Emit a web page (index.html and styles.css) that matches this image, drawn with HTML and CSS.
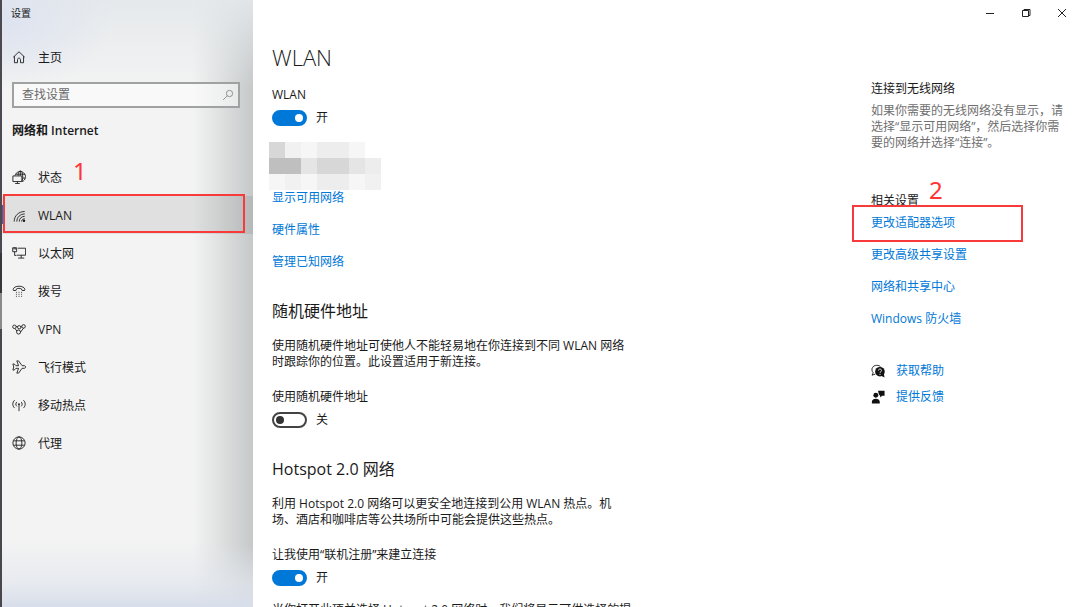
FILE: index.html
```html
<!DOCTYPE html>
<html lang="zh-CN">
<head>
<meta charset="utf-8">
<title>设置</title>
<meta name="viewport" content="width=device-width, initial-scale=1">
<link rel="stylesheet" href="styles.css">
</head>
<body>
<div class="window">
  <div class="edge"></div>
  <aside class="sidebar">
    <div class="app-title">设置</div>
    <a class="nav-item home" href="#">
      <svg class="icon" viewBox="0 0 16 16"><path d="M1.500 8.200 8 2l6.500 6.200M2.800 7v7.500h3.500V11c0-2.300 3.400-2.300 3.400 0v3.500h3.500V7"/></svg>
      <span class="nav-text">主页</span>
    </a>
    <form class="search">
      <input class="search-input" type="search" placeholder="查找设置" aria-label="查找设置">
      <button class="search-button" type="button" aria-label="搜索">
        <svg class="icon-search" viewBox="0 0 16 16"><circle cx="10" cy="6" r="4.200"/><path d="M7 9 1.500 14.500"/></svg>
      </button>
    </form>
    <h2 class="group-title">网络和 Internet</h2>
    <nav class="nav">
      <a class="nav-item" href="#">
        <svg class="icon" viewBox="0 0 16 16"><path d="M3.500 6.500a6 6 0 1 1 8 6.800M4 4.800h11M12 9.200h3.200M7 6.500C7 3 8.200 1 9.500 1s2.800 2.500 2.800 6c0 2.500-.3 4-.8 5.500M9.500 1v5.500"/><path d="M1 6.800h10.300v6.400H1zM6.200 13.200v2.300M3.500 15.500h5.400"/></svg>
        <span class="nav-text">状态</span>
        <span class="mark mark-one">1</span>
      </a>
      <a class="nav-item current" href="#" aria-current="page">
        <svg class="icon" viewBox="0 0 16 16"><path d="M2.500 15.500C2.500 9 7.500 4 14.500 4M5.500 15.500c0-5 4-8.700 9-8.700M8.300 15.500c0-3.500 2.700-6 6.200-6M11 15.500c0-2 1.500-3.200 3.500-3.200"/><circle class="solid" cx="13.700" cy="14.500" r="1.400"/></svg>
        <span class="nav-text">WLAN</span>
        <span class="frame frame-nav"></span>
      </a>
      <a class="nav-item" href="#">
        <svg class="icon" viewBox="0 0 16 16"><path d="M6.500 2.500h9v8h-10M10.500 10.500v3.300M7 13.800h7M.8 2h4.500v4.500H.8zM3 6.500v4.300h2M2.300 2v2M3.800 2v2"/></svg>
        <span class="nav-text">以太网</span>
      </a>
      <a class="nav-item" href="#">
        <svg class="icon" viewBox="0 0 16 16"><path d="M1.300 6.500c0-5.300 13.400-5.300 13.400 0l-.4 1-2.800-.2-.8-1.800c-1.500-.7-3.900-.7-5.400 0l-.8 1.800-2.800.2z"/><path d="M4.500 9.500h1M7.500 9.500h1M10.500 9.500h1M4.500 11.800h1M7.500 11.800h1M10.500 11.800h1M4.500 14.100h1M7.500 14.100h1M10.500 14.100h1"/></svg>
        <span class="nav-text">拨号</span>
      </a>
      <a class="nav-item" href="#">
        <svg class="icon" viewBox="0 0 16 16"><circle cx="2.800" cy="5.500" r="2"/><circle cx="8.200" cy="6" r="1.900"/><circle cx="13.200" cy="5" r="2"/><circle cx="7.500" cy="11.500" r="2.300"/><path d="M3.500 7.500 5.500 10.300M4.800 5.200h1.700M10.100 5.500h1.200M13.200 7 9.800 11.500"/></svg>
        <span class="nav-text">VPN</span>
      </a>
      <a class="nav-item" href="#">
        <svg class="icon" viewBox="0 0 16 16"><path d="M1 4.500h1.500L4.500 6.500h3L5.500 1H7.500l4 5.500h2.300c2.300 0 2.300 3 0 3h-2.300l-4 5.500H5.500l2-5.500h-3l-2 2H1L2 8z"/></svg>
        <span class="nav-text">飞行模式</span>
      </a>
      <a class="nav-item" href="#">
        <svg class="icon" viewBox="0 0 16 16"><path d="M3 2.500C.2 5 .2 9 3 11.500M5.500 4.500c-1.500 1.500-1.500 3.500 0 5M13 2.500c2.800 2.500 2.800 6.500 0 9M10.500 4.500c1.500 1.500 1.500 3.500 0 5M8 7v8"/><circle class="solid" cx="8" cy="7" r="1"/></svg>
        <span class="nav-text">移动热点</span>
      </a>
      <a class="nav-item" href="#">
        <svg class="icon" viewBox="0 0 16 16"><circle cx="8" cy="8" r="7"/><ellipse cx="8" cy="8" rx="3.300" ry="7"/><path d="M1.700 5.500h12.600M1.700 10.500h12.600"/></svg>
        <span class="nav-text">代理</span>
      </a>
    </nav>
  </aside>

  <div class="page">
    <header class="caption">
      <button class="caption-button" type="button" aria-label="最小化"><svg class="icon-caption" viewBox="0 0 10 10"><path d="M1 5.500h8"/></svg></button>
      <button class="caption-button" type="button" aria-label="还原"><svg class="icon-caption" viewBox="0 0 10 10"><path d="M1.500 2.500h6v6h-6zM3 2.500v-1h6v6H7.500"/></svg></button>
      <button class="caption-button" type="button" aria-label="关闭"><svg class="icon-caption" viewBox="0 0 10 10"><path d="M1 1l8 8M9 1 1 9"/></svg></button>
    </header>
    <div class="columns">
      <main class="content">
        <h1 class="page-title">WLAN</h1>
        <section>
          <label class="label" for="wlan">WLAN</label>
          <div class="switch-row"><input class="switch" type="checkbox" role="switch" id="wlan" checked><span>开</span></div>
          <div class="mosaic" aria-hidden="true">
            <i class="g4"></i><i class="g1"></i><i class="g0"></i><i class="g2"></i><i class="g2"></i><i class="g0"></i><i></i>
            <i class="g5"></i><i class="g5"></i><i class="g3"></i><i class="g4"></i><i class="g4"></i><i class="g3"></i><i class="g2"></i>
            <i class="g0"></i><i class="g1"></i><i class="g0"></i><i class="g2"></i><i class="g2"></i><i class="g0"></i><i class="g1"></i>
          </div>
          <div class="links">
            <a class="link" href="#">显示可用网络</a>
            <a class="link" href="#">硬件属性</a>
            <a class="link" href="#">管理已知网络</a>
          </div>
        </section>
        <section class="section">
          <h2 class="section-title">随机硬件地址</h2>
          <p class="text">使用随机硬件地址可使他人不能轻易地在你连接到不同 WLAN 网络时跟踪你的位置。此设置适用于新连接。</p>
          <label class="label" for="random">使用随机硬件地址</label>
          <div class="switch-row"><input class="switch" type="checkbox" role="switch" id="random"><span>关</span></div>
        </section>
        <section class="section">
          <h2 class="section-title">Hotspot 2.0 网络</h2>
          <p class="text">利用 Hotspot 2.0 网络可以更安全地连接到公用 WLAN 热点。机场、酒店和咖啡店等公共场所中可能会提供这些热点。</p>
          <label class="label" for="signup">让我使用“联机注册”来建立连接</label>
          <div class="switch-row"><input class="switch" type="checkbox" role="switch" id="signup" checked><span>开</span></div>
          <p class="text note">当你打开此项并选择 Hotspot 2.0 网络时，我们将显示可供选择的提供商列表。</p>
        </section>
      </main>
      <aside class="related">
        <h2 class="related-title">连接到无线网络</h2>
        <p class="hint">如果你需要的无线网络没有显示，请选择“显示可用网络”，然后选择你需要的网络并选择“连接”。</p>
        <h2 class="related-title settings-title">相关设置<span class="mark mark-two">2</span></h2>
        <div class="links">
          <a class="link framed" href="#">更改适配器选项<span class="frame frame-link"></span></a>
          <a class="link" href="#">更改高级共享设置</a>
          <a class="link" href="#">网络和共享中心</a>
          <a class="link" href="#">Windows 防火墙</a>
        </div>
        <div class="support">
          <a class="link support-link" href="#">
            <svg class="icon-support" viewBox="0 0 16 16"><path class="line" d="M2.500 10 1.200 12.800 5 11.500M2.500 10C-.8 6 2 1.500 6.500 1.500c2 0 3.500.6 4.500 1.800"/><circle cx="10.200" cy="8.800" r="5.500"/><path d="M11.500 13.500l4 2-.8-4.500z"/><path class="cut" d="M8.500 7.500c0-2.300 3.500-2.300 3.500 0 0 1.300-1.700 1.300-1.700 2.600M10.300 11.300v1.200"/></svg>
            <span>获取帮助</span>
          </a>
          <a class="link support-link" href="#">
            <svg class="icon-support" viewBox="0 0 16 16"><circle cx="5.500" cy="6" r="2.800"/><path d="M1 15.500v-2c0-4.800 9-4.800 9 0v2zM8 .8h7.500V6.500h-2.800l-2.200 2.200V6.500L9 5z"/></svg>
            <span>提供反馈</span>
          </a>
        </div>
      </aside>
    </div>
  </div>
</div>
</body>
</html>
```
FILE: styles.css
```css
* { box-sizing: border-box; }
body {
  margin: 0;
  font: 12px/16px "Open Sans", "Noto Sans CJK SC", sans-serif;
  color: #1a1a1a;
  background: #fff;
}
h1, h2, p { margin: 0; font-weight: 400; }
a { color: inherit; text-decoration: none; }
button { border: 0; padding: 0; background: none; font: inherit; }
svg { display: block; flex: none; fill: none; stroke: currentColor; stroke-width: 1; }

.window {
  display: grid;
  grid-template-columns: 2px 251px minmax(0, 1fr);
  height: 100vh;
  overflow: hidden;
}
.edge { background: linear-gradient(#4a4a50 0 253px, #37373b 253px 293px, #8a8a8c 293px 329px, #48484c 329px); }

.sidebar {
  min-height: 0;
  background:
    linear-gradient(to top, #d8deea, rgba(226, 230, 238, 0.7) 24px, rgba(240, 241, 243, 0) 64px),
    radial-gradient(ellipse 110px 70px at 0 20px, #dde3f0, rgba(230, 235, 244, 0)),
    linear-gradient(rgba(228, 232, 235, 0.9), rgba(236, 238, 239, 0) 90px),
    linear-gradient(to right, rgba(198, 202, 202, 0) 76%, rgba(198, 202, 202, 0.4) 86%, #c5c8c9 100%),
    #f3f3f3;
}
.app-title { padding: 5px 9px; font-size: 10px; }
.nav-item {
  position: relative;
  display: flex;
  align-items: center;
  gap: 12px;
  height: 38px;
  padding-left: 10px;
}
.nav-text { padding-top: 2px; }
.icon { width: 14px; height: 14px; }
.icon .solid { fill: currentColor; stroke: none; }
.home { margin-top: 12px; }
.search {
  display: flex;
  align-items: center;
  height: 26px;
  margin: 6px 13px 0 10px;
  border: 2px solid #a0a2a2;
  background: rgba(255, 255, 255, 0.5);
}
.search-input {
  flex: 1;
  min-width: 0;
  padding: 0 8px;
  border: 0;
  outline: 0;
  background: none;
  font: inherit;
}
.search-input::placeholder { color: #6a6a6a; opacity: 1; }
.search-button { padding: 0 4px; color: #777; }
.icon-search { width: 12px; height: 12px; }
.group-title { padding: 15px 10px 0; font-size: 12px; font-weight: 600; line-height: 16px; }
.nav { padding-top: 19px; }
.current { background: rgba(0, 0, 0, 0.08); }
.current::before {
  content: "";
  position: absolute;
  left: 0;
  top: 9px;
  width: 3px;
  height: 19px;
  background: #0078d7;
}

.mark { position: absolute; color: #ff3535; font-family: "Noto Sans", sans-serif; font-size: 24px; line-height: 24px; }
.mark-one { left: 71px; top: 1px; }
.mark-two { left: 58px; top: -15px; }
.frame { position: absolute; border: 2px solid #f93a3a; pointer-events: none; }
.frame-nav { inset: -2px 8px 1px 1px; }
.frame-link { left: -19px; top: -10px; width: 171px; height: 37px; }

.page { display: flex; flex-direction: column; min-width: 0; min-height: 0; }
.caption { display: flex; justify-content: flex-end; height: 26px; }
.caption-button { display: grid; place-items: center; width: 36px; color: #222; }
.icon-caption { width: 10px; height: 10px; }
.columns {
  display: flex;
  justify-content: space-between;
  flex: 1;
  min-height: 0;
  padding: 0 16px 0 19px;
}
.content { width: 362px; padding-top: 15px; }
.page-title { margin-bottom: 14px; font-size: 22px; font-weight: 300; line-height: 32px; }
.label { display: block; }
.switch-row { display: flex; align-items: center; gap: 9px; margin-top: 7px; }
.switch {
  appearance: none;
  display: flex;
  align-items: center;
  width: 35px;
  height: 16px;
  margin: 0;
  padding: 0 2px;
  border: 2px solid #444;
  border-radius: 8px;
}
.switch::before { content: ""; width: 8px; height: 8px; border-radius: 50%; background: #333; }
.switch:checked { justify-content: flex-end; border-color: #0078d7; background: #0078d7; }
.switch:checked::before { background: #fff; }

.mosaic {
  display: grid;
  grid-template-columns: repeat(7, 16px);
  grid-auto-rows: 16px;
  margin: 16px 0 0 -3px;
}
.g0 { background: #f6f6f6; }
.g1 { background: #f1f1f1; }
.g2 { background: #ededed; }
.g3 { background: #e5e5e5; }
.g4 { background: #d7d7d7; }
.g5 { background: #bfbfbf; }

.links { display: flex; flex-direction: column; align-items: flex-start; gap: 16px; }
.link { color: #0078d7; }
.section { padding-top: 29px; }
.section-title { margin-bottom: 15px; font-size: 16px; line-height: 24px; }
.text { margin-bottom: 19px; }
.note { margin-top: 16px; }

.related { width: 193px; padding-top: 55px; }
.related-title { font-size: 12px; line-height: 16px; }
.hint { margin-top: 6px; color: #707070; }
.settings-title { position: relative; margin: 42px 0 6px; }
.framed { position: relative; }
.support { display: flex; flex-direction: column; gap: 10px; padding-top: 36px; }
.support-link { display: flex; align-items: center; gap: 11px; }
.icon-support { width: 14px; height: 14px; fill: #111; stroke: none; }
.icon-support .line { fill: none; stroke: #111; }
.icon-support .cut { fill: none; stroke: #fff; stroke-width: 1; }
```
